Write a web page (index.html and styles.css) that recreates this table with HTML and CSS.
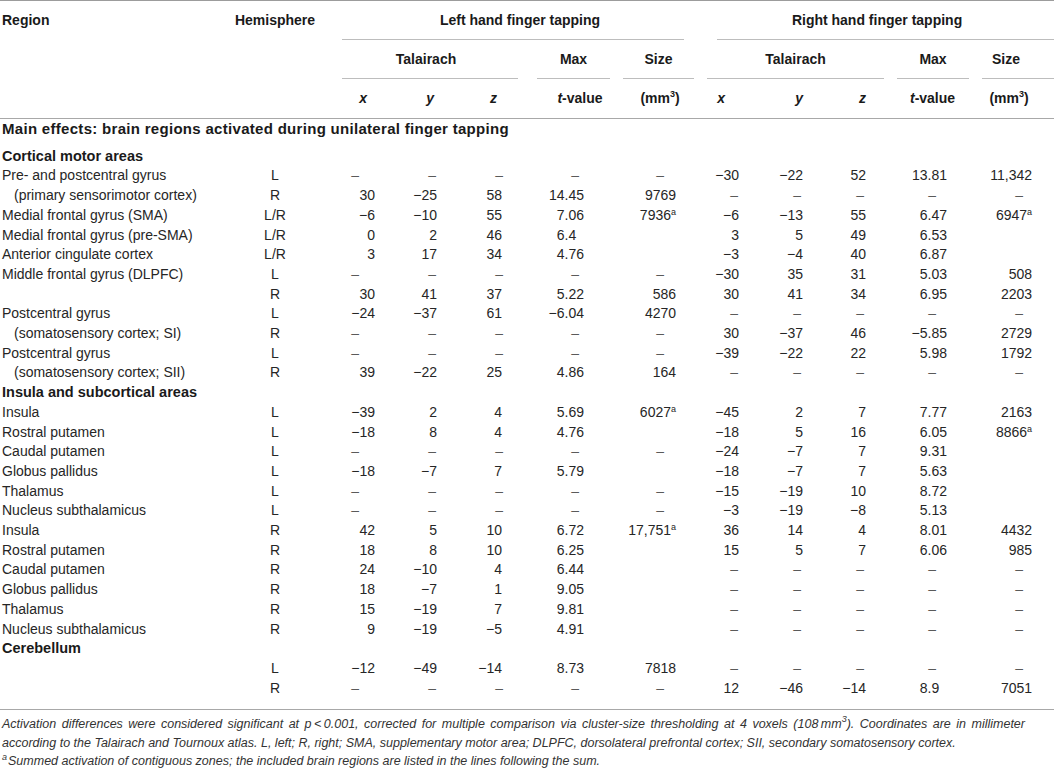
FILE: index.html
```html
<!DOCTYPE html>
<html lang="en">
<head>
<meta charset="utf-8">
<title>Brain regions activated during unilateral finger tapping</title>
<link rel="stylesheet" href="styles.css">
</head>
<body>
<table class="t">
  <colgroup>
    <col class="c-reg"><col class="c-hem"><col class="c-lx"><col class="c-ly"><col class="c-lz"><col class="c-lt"><col class="c-ls"><col class="c-rx"><col class="c-ry"><col class="c-rz"><col class="c-rt"><col class="c-rs">
  </colgroup>
  <thead>
    <tr class="h1">
      <th rowspan="3" class="reg"><div class="hc">Region</div></th>
      <th rowspan="3" class="hem"><div class="hc">Hemisphere</div></th>
      <th colspan="5"><div class="hc ln lh">Left hand finger tapping</div></th>
      <th colspan="5"><div class="hc ln rh">Right hand finger tapping</div></th>
    </tr>
    <tr class="h2">
      <th colspan="3"><div class="hc ln tl">Talairach</div></th>
      <th><div class="hc ln ml">Max</div></th>
      <th><div class="hc ln sl">Size</div></th>
      <th colspan="3"><div class="hc ln tr">Talairach</div></th>
      <th><div class="hc ln mr">Max</div></th>
      <th><div class="hc ln sr">Size</div></th>
    </tr>
    <tr class="h3">
      <th class="ax lx"><div class="hc">x</div></th>
      <th class="ax ly"><div class="hc">y</div></th>
      <th class="ax lz"><div class="hc">z</div></th>
      <th class="lt"><div class="hc"><i>t</i>-value</div></th>
      <th class="ls"><div class="hc">(mm<sup class="s3">3</sup>)</div></th>
      <th class="ax rx"><div class="hc">x</div></th>
      <th class="ax ry"><div class="hc">y</div></th>
      <th class="ax rz"><div class="hc">z</div></th>
      <th class="rt"><div class="hc"><i>t</i>-value</div></th>
      <th class="rs"><div class="hc">(mm<sup class="s3">3</sup>)</div></th>
    </tr>
  </thead>
  <tbody>
    <tr class="sec first"><td colspan="12">Main effects: brain regions activated during unilateral finger tapping</td></tr>
    <tr class="sec"><td colspan="12">Cortical motor areas</td></tr>
    <tr class="r"><td>Pre- and postcentral gyrus</td><td>L</td><td class="e">–</td><td class="e">–</td><td class="e">–</td><td class="e">–</td><td class="e">–</td><td>−30</td><td>−22</td><td>52</td><td>13.81</td><td>11,342</td></tr>
    <tr class="r"><td class="in">(primary sensorimotor cortex)</td><td>R</td><td>30</td><td>−25</td><td>58</td><td>14.45</td><td>9769</td><td class="e">–</td><td class="e">–</td><td class="e">–</td><td class="e">–</td><td class="e">–</td></tr>
    <tr class="r"><td>Medial frontal gyrus (SMA)</td><td>L/R</td><td>−6</td><td>−10</td><td>55</td><td>7.06</td><td>7936<sup class="s">a</sup></td><td>−6</td><td>−13</td><td>55</td><td>6.47</td><td>6947<sup class="s">a</sup></td></tr>
    <tr class="r"><td>Medial frontal gyrus (pre-SMA)</td><td>L/R</td><td>0</td><td>2</td><td>46</td><td><span class="d1">6.4</span></td><td></td><td>3</td><td>5</td><td>49</td><td>6.53</td><td></td></tr>
    <tr class="r"><td>Anterior cingulate cortex</td><td>L/R</td><td>3</td><td>17</td><td>34</td><td>4.76</td><td></td><td>−3</td><td>−4</td><td>40</td><td>6.87</td><td></td></tr>
    <tr class="r"><td>Middle frontal gyrus (DLPFC)</td><td>L</td><td class="e">–</td><td class="e">–</td><td class="e">–</td><td class="e">–</td><td class="e">–</td><td>−30</td><td>35</td><td>31</td><td>5.03</td><td>508</td></tr>
    <tr class="r"><td></td><td>R</td><td>30</td><td>41</td><td>37</td><td>5.22</td><td>586</td><td>30</td><td>41</td><td>34</td><td>6.95</td><td>2203</td></tr>
    <tr class="r"><td>Postcentral gyrus</td><td>L</td><td>−24</td><td>−37</td><td>61</td><td>−6.04</td><td>4270</td><td class="e">–</td><td class="e">–</td><td class="e">–</td><td class="e">–</td><td class="e">–</td></tr>
    <tr class="r"><td class="in">(somatosensory cortex; SI)</td><td>R</td><td class="e">–</td><td class="e">–</td><td class="e">–</td><td class="e">–</td><td class="e">–</td><td>30</td><td>−37</td><td>46</td><td>−5.85</td><td>2729</td></tr>
    <tr class="r"><td>Postcentral gyrus</td><td>L</td><td class="e">–</td><td class="e">–</td><td class="e">–</td><td class="e">–</td><td class="e">–</td><td>−39</td><td>−22</td><td>22</td><td>5.98</td><td>1792</td></tr>
    <tr class="r"><td class="in">(somatosensory cortex; SII)</td><td>R</td><td>39</td><td>−22</td><td>25</td><td>4.86</td><td>164</td><td class="e">–</td><td class="e">–</td><td class="e">–</td><td class="e">–</td><td class="e">–</td></tr>
    <tr class="sec"><td colspan="12">Insula and subcortical areas</td></tr>
    <tr class="r"><td>Insula</td><td>L</td><td>−39</td><td>2</td><td>4</td><td>5.69</td><td>6027<sup class="s">a</sup></td><td>−45</td><td>2</td><td>7</td><td>7.77</td><td>2163</td></tr>
    <tr class="r"><td>Rostral putamen</td><td>L</td><td>−18</td><td>8</td><td>4</td><td>4.76</td><td></td><td>−18</td><td>5</td><td>16</td><td>6.05</td><td>8866<sup class="s">a</sup></td></tr>
    <tr class="r"><td>Caudal putamen</td><td>L</td><td class="e">–</td><td class="e">–</td><td class="e">–</td><td class="e">–</td><td class="e">–</td><td>−24</td><td>−7</td><td>7</td><td>9.31</td><td></td></tr>
    <tr class="r"><td>Globus pallidus</td><td>L</td><td>−18</td><td>−7</td><td>7</td><td>5.79</td><td></td><td>−18</td><td>−7</td><td>7</td><td>5.63</td><td></td></tr>
    <tr class="r"><td>Thalamus</td><td>L</td><td class="e">–</td><td class="e">–</td><td class="e">–</td><td class="e">–</td><td class="e">–</td><td>−15</td><td>−19</td><td>10</td><td>8.72</td><td></td></tr>
    <tr class="r"><td>Nucleus subthalamicus</td><td>L</td><td class="e">–</td><td class="e">–</td><td class="e">–</td><td class="e">–</td><td class="e">–</td><td>−3</td><td>−19</td><td>−8</td><td>5.13</td><td></td></tr>
    <tr class="r"><td>Insula</td><td>R</td><td>42</td><td>5</td><td>10</td><td>6.72</td><td>17,751<sup class="s">a</sup></td><td>36</td><td>14</td><td>4</td><td>8.01</td><td>4432</td></tr>
    <tr class="r"><td>Rostral putamen</td><td>R</td><td>18</td><td>8</td><td>10</td><td>6.25</td><td></td><td>15</td><td>5</td><td>7</td><td>6.06</td><td>985</td></tr>
    <tr class="r"><td>Caudal putamen</td><td>R</td><td>24</td><td>−10</td><td>4</td><td>6.44</td><td></td><td class="e">–</td><td class="e">–</td><td class="e">–</td><td class="e">–</td><td class="e">–</td></tr>
    <tr class="r"><td>Globus pallidus</td><td>R</td><td>18</td><td>−7</td><td>1</td><td>9.05</td><td></td><td class="e">–</td><td class="e">–</td><td class="e">–</td><td class="e">–</td><td class="e">–</td></tr>
    <tr class="r"><td>Thalamus</td><td>R</td><td>15</td><td>−19</td><td>7</td><td>9.81</td><td></td><td class="e">–</td><td class="e">–</td><td class="e">–</td><td class="e">–</td><td class="e">–</td></tr>
    <tr class="r"><td>Nucleus subthalamicus</td><td>R</td><td>9</td><td>−19</td><td>−5</td><td>4.91</td><td></td><td class="e">–</td><td class="e">–</td><td class="e">–</td><td class="e">–</td><td class="e">–</td></tr>
    <tr class="sec"><td colspan="12">Cerebellum</td></tr>
    <tr class="r"><td></td><td>L</td><td>−12</td><td>−49</td><td>−14</td><td>8.73</td><td>7818</td><td class="e">–</td><td class="e">–</td><td class="e">–</td><td class="e">–</td><td class="e">–</td></tr>
    <tr class="r last"><td></td><td>R</td><td class="e">–</td><td class="e">–</td><td class="e">–</td><td class="e">–</td><td class="e">–</td><td>12</td><td>−46</td><td>−14</td><td><span class="d1">8.9</span></td><td>7051</td></tr>
  </tbody>
</table>
<div class="note">
  <p><span class="jl">Activation differences were considered significant at p&thinsp;&lt;&thinsp;0.001, corrected for multiple comparison via cluster-size thresholding at 4 voxels (108&thinsp;mm<sup class="s3">3</sup>). Coordinates are in millimeter</span><span class="nl">according to the Talairach and Tournoux atlas. L, left; R, right; SMA, supplementary motor area; DLPFC, dorsolateral prefrontal cortex; SII, secondary somatosensory cortex.</span></p>
  <p><sup class="fa">a</sup>Summed activation of contiguous zones; the included brain regions are listed in the lines following the sum.</p>
</div>
</body>
</html>
```

FILE: styles.css
```css
html, body {
  margin: 0;
  padding: 0;
  background: #ffffff;
}

body {
  font-family: "Liberation Sans", Arial, Helvetica, sans-serif;
  font-size: 14px;
  color: #262626;
}

.t {
  width: 1054px;
  table-layout: fixed;
  border-collapse: separate;
  border-spacing: 0;
  border-top: 1px solid #9c9c9c;
}

.c-reg { width: 230px; }
.c-hem { width: 90px; }
.c-lx { width: 70px; }
.c-ly { width: 70px; }
.c-lz { width: 62px; }
.c-lt { width: 98px; }
.c-ls { width: 80px; }
.c-rx { width: 70px; }
.c-ry { width: 65px; }
.c-rz { width: 55px; }
.c-rt { width: 85px; }
.c-rs { width: 79px; }

/* ---------- header ---------- */
.t th {
  padding: 0;
  font-weight: bold;
  font-size: 14px;
  color: #1a1a1a;
  text-align: center;
  vertical-align: top;
  white-space: nowrap;
}

.hc {
  height: 38px;
  line-height: 38px;
  border-bottom: 1px solid transparent;
}

.ln { border-bottom-color: #bdbdbd; }

.t th.reg { text-align: left; border-bottom: 1px solid #a8a8a8; }
.t th.reg .hc { padding-left: 2px; }
.t th.hem { border-bottom: 1px solid #a8a8a8; }
.h3 th { border-bottom: 1px solid #a8a8a8; }

.lh { margin: 0 16px 0 22px; padding-left: 14px; }
.rh { margin: 0 0 0 17px; padding-right: 17px; }
.tl { margin: 0 4px 0 22px; padding-right: 8px; }
.ml { margin: 0 10px 0 15px; }
.sl { margin: 0 6px 0 3px; }
.tr { margin: 0 6px 0 7px; }
.mr { margin: 0 6px 0 7px; }
.sr { margin: 0 0 0 7px; padding-right: 24px; }

.t th.ax { font-style: italic; text-align: right; }
.t th.lx { padding-right: 23px; }
.t th.ly { padding-right: 26px; }
.t th.lz { padding-right: 25px; }
.t th.rx { padding-right: 45px; }
.t th.ry { padding-right: 32px; }
.t th.rz { padding-right: 24px; }
.t th.lt { padding-left: 18px; }
.t th.rs { padding-right: 11px; }

.s3 {
  font-size: 9px;
  line-height: 0;
  vertical-align: 6px;
}

/* ---------- body ---------- */
.t td {
  padding: 0;
  line-height: 19.7px;
  white-space: nowrap;
  text-align: right;
}

.sec td {
  text-align: left;
  font-weight: bold;
  font-size: 14.5px;
  color: #1a1a1a;
  padding-left: 2px;
}

.sec.first td {
  padding-bottom: 8px;
  font-size: 15px;
  letter-spacing: 0.3px;
}

.r td:nth-child(1) { text-align: left; padding-left: 2px; }
.r td.in { padding-left: 14px; }
.r td:nth-child(2) { text-align: center; }

.r td:nth-child(3) { padding-right: 15px; }
.r td:nth-child(4) { padding-right: 23px; }
.r td:nth-child(5) { padding-right: 20px; }
.r td:nth-child(6) { padding-right: 36px; }
.r td:nth-child(7) { padding-right: 24px; }
.r td:nth-child(8) { padding-right: 31px; }
.r td:nth-child(9) { padding-right: 32px; }
.r td:nth-child(10) { padding-right: 24px; }
.r td:nth-child(11) { padding-right: 28px; }
.r td:nth-child(12) { padding-right: 22px; }

.r td.e { color: #5a5a5a; }
.r td:nth-child(3).e { padding-right: 31px; }
.r td:nth-child(4).e { padding-right: 24px; }
.r td:nth-child(5).e { padding-right: 19px; }
.r td:nth-child(6).e { padding-right: 41px; }
.r td:nth-child(7).e { padding-right: 36px; }
.r td:nth-child(8).e { padding-right: 32px; }
.r td:nth-child(9).e { padding-right: 34px; }
.r td:nth-child(10).e { padding-right: 26px; }
.r td:nth-child(11).e { padding-right: 39px; }
.r td:nth-child(12).e { padding-right: 31px; }

.d1 { padding-right: 7.8px; }

.s {
  font-size: 9px;
  line-height: 0;
  vertical-align: 5px;
}

.r.last td {
  padding-bottom: 11px;
  border-bottom: 1px solid #a8a8a8;
}

/* ---------- footnote ---------- */
.note {
  width: 1023px;
  padding: 5px 0 0 2px;
  font-size: 12.5px;
  font-style: italic;
  line-height: 18.5px;
  color: #333333;
}

.note p { margin: 0; }

.jl {
  display: block;
  text-align: justify;
  text-align-last: justify;
}

.nl { display: block; }

.fa {
  font-size: 9px;
  line-height: 0;
  vertical-align: 5px;
  margin-right: 1px;
}
```
